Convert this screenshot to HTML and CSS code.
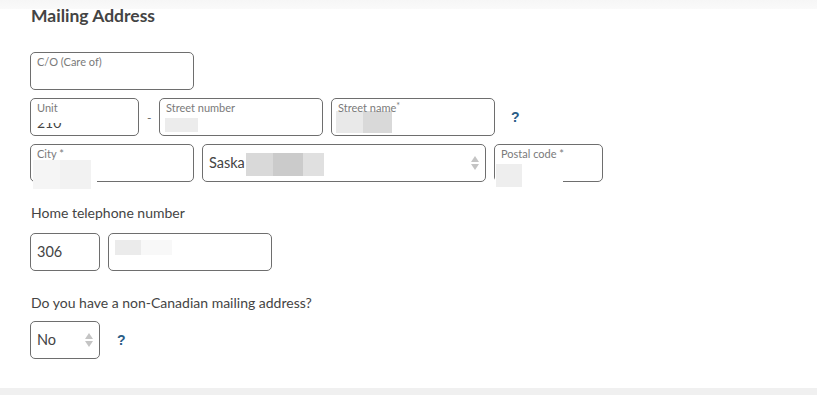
FILE: index.html
```html
<!DOCTYPE html>
<html lang="en">
<head>
  <meta charset="UTF-8">
  <title>Mailing Address</title>
  <link rel="stylesheet" href="styles.css">
</head>
<body>
  <div class="topbar"></div>

  <section class="form">
    <h2>Mailing Address</h2>

    <div class="row first">
      <div class="field w164">
        <span class="lbl">C/O (Care of)</span>
      </div>
    </div>

    <div class="row">
      <div class="field w109">
        <span class="lbl">Unit</span>
        <span class="cut"><span class="cut-in">210</span></span>
      </div>
      <span class="dash">-</span>
      <div class="field w164">
        <span class="lbl">Street number</span>
        <span class="blur" style="left:5px;top:19px;width:33px;height:14px;background:#ececec"></span>
      </div>
      <div class="field w164">
        <span class="lbl">Street name<sup>*</sup></span>
        <span class="blur" style="left:4px;top:12px;width:27px;height:22px;background:#e9e9e9"></span>
        <span class="blur" style="left:31px;top:12px;width:29px;height:22px;background:#d9d9d9"></span>
      </div>
      <span class="help">?</span>
    </div>

    <div class="row">
      <div class="field w164">
        <span class="lbl">City *</span>
        <span class="blur" style="left:2px;top:15px;width:64px;height:29px;background:#fff"></span>
        <span class="blur" style="left:2px;top:15px;width:27px;height:29px;background:#f5f5f5"></span>
        <span class="blur" style="left:29px;top:15px;width:31px;height:29px;background:#f2f2f2"></span>
      </div>
      <div class="field select w284">
        <span class="val">Saska</span>
        <span class="blur" style="left:43px;top:8px;width:27px;height:23px;background:#d9d9d9"></span>
        <span class="blur" style="left:70px;top:8px;width:30px;height:23px;background:#cbcbcb"></span>
        <span class="blur" style="left:100px;top:8px;width:21px;height:23px;background:#e0e0e0"></span>
        <span class="arrows"></span>
      </div>
      <div class="field w109">
        <span class="lbl">Postal code *</span>
        <span class="blur" style="left:0;top:19px;width:68px;height:24px;background:#fff"></span>
        <span class="blur" style="left:1px;top:19px;width:26px;height:23px;background:#eeeeee"></span>
      </div>
    </div>

    <p class="q phone-q">Home telephone number</p>
    <div class="row phone-row">
      <div class="field w70 plain"><span class="val">306</span></div>
      <div class="field w164 plain">
        <span class="blur" style="left:6px;top:6px;width:26px;height:15px;background:#ebebeb"></span>
        <span class="blur" style="left:32px;top:6px;width:31px;height:15px;background:#f8f8f8"></span>
      </div>
    </div>

    <p class="q abroad-q">Do you have a non-Canadian mailing address?</p>
    <div class="row abroad-row">
      <div class="field select w70 plain">
        <span class="val">No</span>
        <span class="arrows"></span>
      </div>
      <span class="help near">?</span>
    </div>
  </section>

  <div class="bottombar"></div>
</body>
</html>
```

FILE: styles.css
```css
body {
  margin: 0;
  background: #fff;
  font-family: "Lato", "Open Sans", sans-serif;
  color: #444;
  height: 395px;
  position: relative;
  overflow: hidden;
}
.topbar {
  height: 9px;
  background: linear-gradient(#f6f6f6, #fafafa);
}
.form {
  padding: 0 30px;
}
h2 {
  margin: -3px 0 0 1px;
  font-size: 17.5px;
  font-weight: 700;
  color: #444;
  line-height: 20px;
}
.row {
  display: flex;
  align-items: center;
  gap: 8px;
  margin-top: 8px;
}
.row.first {
  margin-top: 26px;
}
.field {
  position: relative;
  box-sizing: border-box;
  height: 38px;
  border: 1px solid #6e6e6e;
  border-radius: 5px;
  background: #fff;
  flex: none;
  overflow: visible;
}
.w70 { width: 70px; }
.w109 { width: 109px; }
.w164 { width: 164px; }
.w284 { width: 284px; }
.lbl {
  position: relative;
  z-index: 2;
  display: block;
  padding: 2px 0 0 6px;
  font-size: 11px;
  line-height: 13px;
  color: #7a7a7a;
}
.lbl sup {
  font-size: 9px;
  vertical-align: 3px;
  line-height: 0;
}
.val {
  display: block;
  padding: 0 6px;
  font-size: 14.5px;
  line-height: 36px;
  color: #444;
}
.cut {
  display: block;
  margin: 9px 0 0 6px;
  height: 6px;
  overflow: hidden;
  font-size: 14px;
  line-height: 16px;
  color: #444;
}
.cut-in {
  display: block;
  margin-top: -8px;
}
.blur {
  position: absolute;
  z-index: 1;
}
.dash {
  width: 4px;
  font-size: 12px;
  color: #666;
  text-align: center;
}
.help {
  margin-left: 8px;
  font-size: 14px;
  font-weight: 900;
  color: #2b5d86;
  font-family: "Liberation Sans", sans-serif;
}
.help.near {
  margin-left: 9px;
}
.arrows {
  position: absolute;
  right: 5px;
  top: 10px;
  width: 9px;
  height: 16px;
}
.arrows::before,
.arrows::after {
  content: "";
  position: absolute;
  left: 0;
  border-left: 4.5px solid transparent;
  border-right: 4.5px solid transparent;
}
.arrows::before {
  top: 1px;
  border-bottom: 6px solid #c4c4c4;
}
.arrows::after {
  top: 9px;
  border-top: 6px solid #c4c4c4;
}
.q {
  margin: 0 0 0 1px;
  font-size: 14px;
  line-height: 16px;
  color: #444;
}
.phone-q {
  margin-top: 23px;
}
.phone-row {
  margin-top: 12px;
}
.abroad-q {
  margin-top: 24px;
}
.abroad-row {
  margin-top: 10px;
}
.bottombar {
  position: absolute;
  left: 0;
  right: 0;
  bottom: 0;
  height: 7px;
  background: #f0f0f0;
}
```
